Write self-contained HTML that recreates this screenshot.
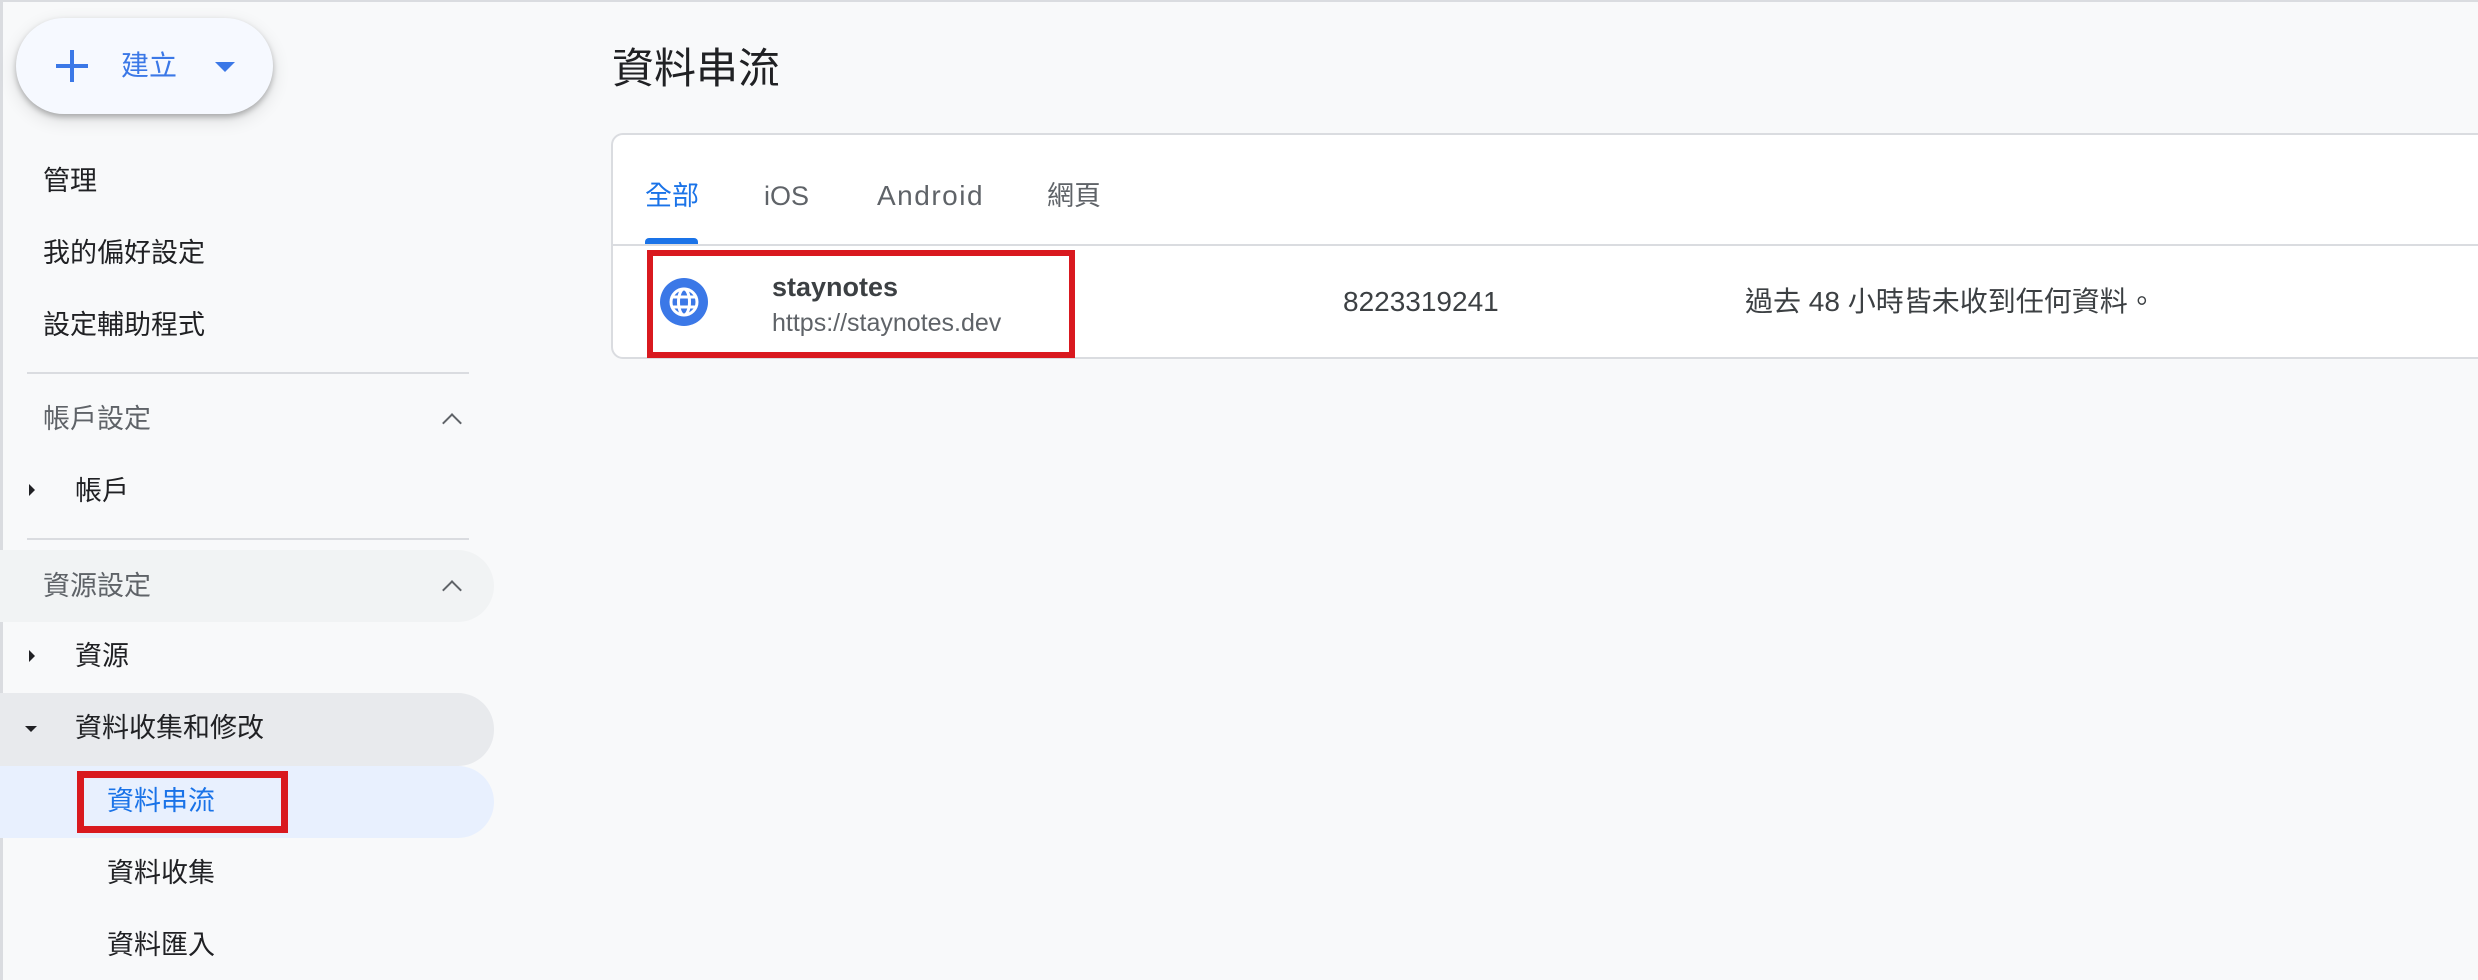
<!DOCTYPE html>
<html><head><meta charset="utf-8"><style>
*{margin:0;padding:0;box-sizing:border-box}
body{width:2478px;height:980px;background:#f8f9fa;font-family:"Liberation Sans","Noto Sans CJK TC",sans-serif;position:relative;overflow:hidden;color:#202124}
.frame{position:absolute;left:0;top:0;width:2478px;height:980px;border-left:3px solid #dadce0;border-top:2px solid #dadce0}
.a{position:absolute;white-space:nowrap}
.nav{font-size:27px;line-height:36px;transform:translateY(-18px)}
.btn{position:absolute;left:16px;top:18px;width:257px;height:96px;border-radius:48px;background:#f6f9ff;box-shadow:0 3px 6px rgba(0,0,0,.25),0 6px 18px rgba(0,0,0,.12)}
.div{position:absolute;left:27px;width:442px;height:2px;background:#dadce0}
.chev{position:absolute;width:14px;height:14px;border-left:2.5px solid #5f6368;border-top:2.5px solid #5f6368;transform:rotate(45deg)}
.tri{position:absolute;width:0;height:0}
</style></head><body>
<div class="frame"></div>
<div class="btn"></div>
<div class="a" style="left:56px;top:64px;width:32px;height:4px;background:#3b78e7"></div>
<div class="a" style="left:70px;top:50px;width:4px;height:32px;background:#3b78e7"></div>
<div class="a nav" style="left:121px;top:66px;color:#3b78e7;font-size:28px">建立</div>
<div class="tri" style="left:215px;top:62px;border-left:10px solid transparent;border-right:10px solid transparent;border-top:10px solid #3b78e7"></div>

<div class="a nav" style="left:43px;top:181px">管理</div>
<div class="a nav" style="left:43px;top:253px">我的偏好設定</div>
<div class="a nav" style="left:43px;top:325px">設定輔助程式</div>
<div class="div" style="top:372px"></div>
<div class="a nav" style="left:43px;top:419px;color:#5f6368">帳戶設定</div>
<div class="chev" style="left:445px;top:416px"></div>
<div class="tri" style="left:29px;top:484px;border-top:6px solid transparent;border-bottom:6px solid transparent;border-left:6px solid #202124"></div>
<div class="a nav" style="left:75px;top:491px">帳戶</div>
<div class="div" style="top:538px"></div>
<div class="a" style="left:0;top:550px;width:494px;height:72px;background:#f1f3f4;border-radius:0 36px 36px 0"></div>
<div class="a nav" style="left:43px;top:586px;color:#5f6368">資源設定</div>
<div class="chev" style="left:445px;top:583px"></div>
<div class="tri" style="left:29px;top:650px;border-top:6px solid transparent;border-bottom:6px solid transparent;border-left:6px solid #202124"></div>
<div class="a nav" style="left:75px;top:656px">資源</div>
<div class="a" style="left:0;top:693px;width:494px;height:73px;background:#e8eaed;border-radius:0 36px 36px 0"></div>
<div class="tri" style="left:25px;top:726px;border-left:6px solid transparent;border-right:6px solid transparent;border-top:6px solid #202124"></div>
<div class="a nav" style="left:75px;top:728px">資料收集和修改</div>
<div class="a" style="left:0;top:766px;width:494px;height:72px;background:#e8f0fe;border-radius:0 36px 36px 0"></div>
<div class="a nav" style="left:107px;top:801px;color:#1a73e8">資料串流</div>
<div class="a" style="left:77px;top:771px;width:211px;height:62px;border:7px solid #d9191f"></div>
<div class="a nav" style="left:107px;top:873px">資料收集</div>
<div class="a nav" style="left:107px;top:945px">資料匯入</div>

<div class="a" style="left:612px;top:69px;font-size:42px;line-height:50px;transform:translateY(-25px)">資料串流</div>
<div class="a" style="left:611px;top:133px;width:1900px;height:226px;background:#fff;border:2px solid #dadce0;border-radius:12px"></div>
<div class="a nav" style="left:645px;top:196px;color:#1a73e8;font-size:27px">全部</div>
<div class="a nav" style="left:764px;top:196px;color:#5f6368;font-size:27px">iOS</div>
<div class="a nav" style="left:877px;top:196px;color:#5f6368;font-size:28px;letter-spacing:1.5px">Android</div>
<div class="a nav" style="left:1047px;top:196px;color:#5f6368;font-size:27px">網頁</div>
<div class="a" style="left:645px;top:238px;width:53px;height:7px;background:#1a73e8;border-radius:4px 4px 0 0"></div>
<div class="a" style="left:612px;top:244px;width:1870px;height:2px;background:#dadce0"></div>
<div class="a" style="left:647px;top:250px;width:428px;height:108px;border:6px solid #d9191f"></div>
<svg class="a" style="left:660px;top:278px" width="48" height="48" viewBox="0 0 48 48">
<circle cx="24" cy="24" r="24" fill="#3b78e7"/>
<g fill="none" stroke="#fff" stroke-width="3"><circle cx="24" cy="24" r="13"/><ellipse cx="24" cy="24" rx="5.5" ry="13"/><line x1="11" y1="19" x2="37" y2="19"/><line x1="11" y1="29" x2="37" y2="29"/></g>
</svg>
<div class="a nav" style="left:772px;top:287px;font-size:27px;font-weight:bold;color:#3c4043">staynotes</div>
<div class="a nav" style="left:772px;top:323px;font-size:25px;color:#5f6368">https://staynotes.dev</div>
<div class="a nav" style="left:1343px;top:302px;font-size:28px;color:#3c4043">8223319241</div>
<div class="a nav" style="left:1745px;top:302px;font-size:28px;color:#3c4043">過去 48 小時皆未收到任何資料。</div>
</body></html>
